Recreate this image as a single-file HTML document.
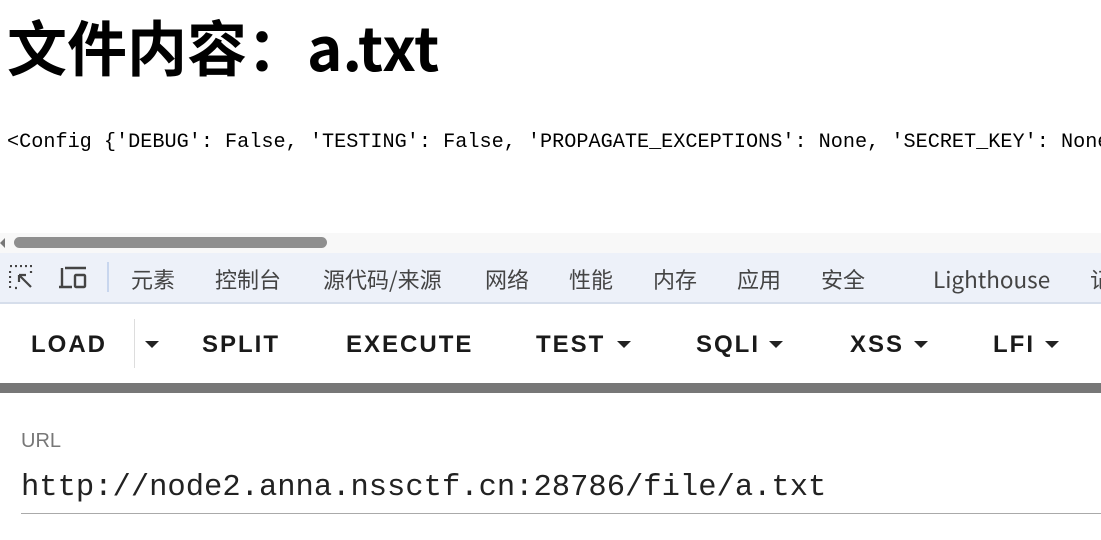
<!DOCTYPE html>
<html><head><meta charset="utf-8"><style>
body{margin:0;width:1101px;height:540px;overflow:hidden;background:#fff;position:relative;font-family:"Liberation Sans","Noto Sans CJK SC",sans-serif}
.a{position:absolute;white-space:nowrap}
h1{position:absolute;left:7px;top:6px;margin:0;font-size:60px;font-weight:bold;font-family:"Noto Sans CJK SC",sans-serif;line-height:80px;letter-spacing:0}
.cfg{left:7px;top:131px;font-family:"Liberation Mono","Noto Serif CJK SC",monospace;font-size:20.2px;color:#000}
.tab{top:264px;font-size:22px;color:#444;font-family:"Noto Sans CJK SC","Liberation Sans",sans-serif;line-height:30px}
.btn{top:330px;font-size:24px;font-weight:bold;letter-spacing:2px;color:#1a1a1a;line-height:30px}
.car{width:0;height:0;border-left:7px solid transparent;border-right:7px solid transparent;border-top:7px solid #222;top:341px}
</style></head><body>
<h1>文件内容：a.txt</h1>
<div class="a cfg">&lt;Config {'DEBUG': False, 'TESTING': False, 'PROPAGATE_EXCEPTIONS': None, 'SECRET_KEY': None}</div>
<div class="a" style="left:0;top:233px;width:1101px;height:20px;background:#f8f8f8"></div>
<div class="a" style="left:0;top:238px;width:0;height:0;border-top:5px solid transparent;border-bottom:5px solid transparent;border-right:5px solid #777"></div>
<div class="a" style="left:14px;top:237px;width:313px;height:11px;border-radius:6px;background:#8f8f8f"></div>
<div class="a" style="left:0;top:253px;width:1101px;height:49px;background:#edf1f9;border-bottom:2px solid #d6deeb"></div>
<svg class="a" style="left:9px;top:265px" width="26" height="26" viewBox="0 0 26 26" fill="none" stroke="#444" stroke-width="2.2">
<path d="M1 1h2M6 1h2M11 1h2M16 1h2M21 1h2M1 6v2M1 11v2M1 16v2M1 21v2M22 6v2M6 23h2"/>
<path d="M10 10l12 12M10 10h7M10 10v7"/></svg>
<svg class="a" style="left:58px;top:266px" width="32" height="24" viewBox="0 0 32 24" fill="none" stroke="#444" stroke-width="2.4">
<path d="M4 2v18M1 21h13M7 2h21"/><rect x="17" y="9" width="10" height="12" rx="1"/></svg>
<div class="a" style="left:107px;top:262px;width:2px;height:30px;background:#c8d6ee"></div>
<div class="a tab" style="left:131px">元素</div>
<div class="a tab" style="left:215px">控制台</div>
<div class="a tab" style="left:323px">源代码/来源</div>
<div class="a tab" style="left:485px">网络</div>
<div class="a tab" style="left:569px">性能</div>
<div class="a tab" style="left:653px">内存</div>
<div class="a tab" style="left:737px">应用</div>
<div class="a tab" style="left:821px">安全</div>
<div class="a tab" style="left:933px;font-size:22.5px">Lighthouse</div>
<div class="a tab" style="left:1090px">记</div>
<div class="a btn" style="left:31px">LOAD</div>
<div class="a" style="left:134px;top:319px;width:1px;height:49px;background:#ddd"></div>
<div class="a car" style="left:145px"></div>
<div class="a btn" style="left:202px">SPLIT</div>
<div class="a btn" style="left:346px">EXECUTE</div>
<div class="a btn" style="left:536px">TEST</div>
<div class="a car" style="left:617px"></div>
<div class="a btn" style="left:696px">SQLI</div>
<div class="a car" style="left:769px"></div>
<div class="a btn" style="left:850px">XSS</div>
<div class="a car" style="left:914px"></div>
<div class="a btn" style="left:993px">LFI</div>
<div class="a car" style="left:1045px"></div>
<div class="a" style="left:0;top:383px;width:1101px;height:10px;background:#777"></div>
<div class="a" style="left:21px;top:430px;font-size:20px;color:#777">URL</div>
<div class="a" style="left:21px;top:471px;font-family:'Liberation Mono',monospace;font-size:30.5px;color:#222">http://node2.anna.nssctf.cn:28786/file/a.txt</div>
<div class="a" style="left:21px;top:513px;width:1080px;height:1px;background:#aaa"></div>
</body></html>
